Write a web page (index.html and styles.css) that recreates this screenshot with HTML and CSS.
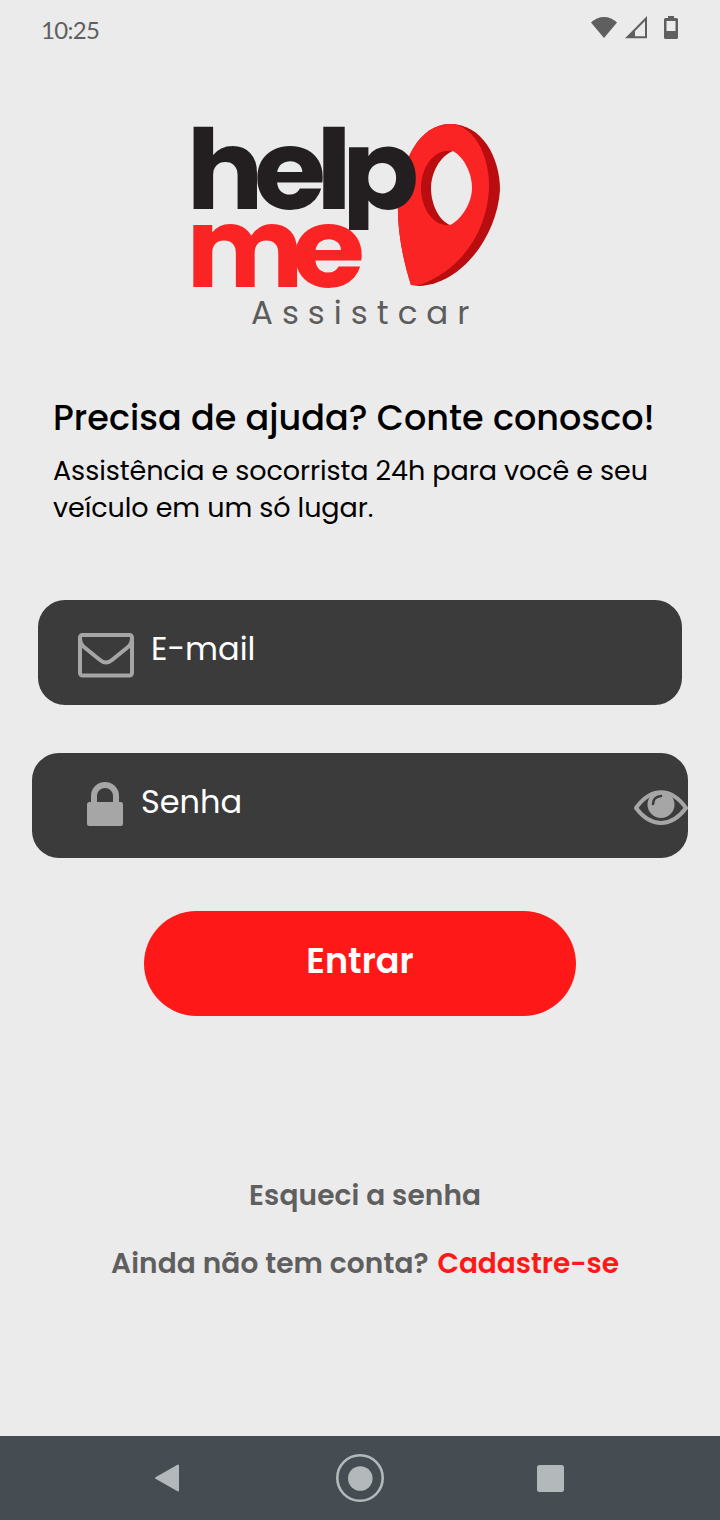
FILE: index.html
```html
<!DOCTYPE html>
<html lang="pt-BR">
<head>
    <meta charset="UTF-8">
    <meta name="viewport" content="width=device-width, initial-scale=1.0">
    <title>Help Me Assistcar</title>
    <link rel="stylesheet" href="styles.css">
</head>
<body>
    <div class="screen">
        <header class="status-bar">
            <span class="clock">10:25</span>
            <svg class="status-icons" width="90" height="26" viewBox="0 0 90 26">
                <path d="M1 8.500C8 1 20 1 27 8.500L14 24Z" fill="#5f5f5f"/>
                <path d="M37.500 23.200H56V4.500Z" fill="none" stroke="#5f5f5f" stroke-width="2"/>
                <path d="M35.500 24H45V15Z" fill="#5f5f5f"/>
                <path d="M78 2h6v2h2.500q1.500 0 1.500 1.500v18q0 1.500-1.500 1.500h-11q-1.500 0-1.500-1.500v-18q0-1.500 1.500-1.500H78ZM76.500 7v10h9V7Z" fill="#5f5f5f" fill-rule="evenodd"/>
            </svg>
        </header>

        <main class="login">
            <div class="brand">
                <svg class="logo" width="314" height="170" viewBox="190 121 314 170">
                    <clipPath id="stem"><path d="M340 100H430V230H340Z"/></clipPath>
                    <!-- map pin -->
                    <path d="M411 285C403 260 397 230 398 203C401 159 420 125 449 124C480 123 500 155 500 190C497 236 462 284 419 286Z" fill="#b90d10"/>
                    <path d="M411 285C403 260 397 230 398 203C401 159 420 125 449 124C474 124 490 156 489 189C487 228 465 268 420 285Z" fill="#fb2424"/>
                    <path d="M453 151C433 148 421 168 421 188C421 209 434 227 450 225Z" fill="#b90d10"/>
                    <path d="M453 151C465 158 472 174 472 188C472 203 461 220 450 225C438 220 431 203 431 188C431 173 440 156 453 151Z" fill="#ebebeb"/>
                    <!-- wordmark -->
                    <g class="wordmark">
                        <text class="me" x="186.500" y="287" textLength="117" lengthAdjust="spacingAndGlyphs">m</text>
                        <text class="me" x="292" y="287" textLength="73" lengthAdjust="spacingAndGlyphs">e</text>
                        <text x="186.500" y="209" textLength="77" lengthAdjust="spacingAndGlyphs">h</text>
                        <text x="254" y="209" textLength="72" lengthAdjust="spacingAndGlyphs">e</text>
                        <text x="315.500" y="209" textLength="37" lengthAdjust="spacingAndGlyphs">l</text>
                        <text x="342" y="209" textLength="77" lengthAdjust="spacingAndGlyphs" clip-path="url(#stem)">p</text>
                    </g>
                </svg>
                <p class="brand-sub">Assistcar</p>
            </div>

            <div class="intro">
                <h1>Precisa de ajuda? Conte conosco!</h1>
                <p class="line-one">Assistência e socorrista 24h para você e seu</p>
                <p class="line-two">veículo em um só lugar.</p>
            </div>

            <form class="form">
                <label class="field email">
                    <svg width="56" height="45" viewBox="0 0 56 45" fill="none" stroke="#a6a6a6" stroke-width="4">
                        <rect x="2" y="2" width="52" height="40.500" rx="2.500"/>
                        <path d="M2 5Q2 11 6 14L22 27Q28 32 34 27L50 14Q54 11 54 5"/>
                    </svg>
                    <input type="email" placeholder="E-mail">
                </label>
                <label class="field password">
                    <svg class="lock" width="36" height="45" viewBox="0 0 36 45">
                        <path d="M7 22V14a11 11 0 0 1 22 0v8" fill="none" stroke="#a6a6a6" stroke-width="6"/>
                        <rect y="20" width="36" height="24" rx="2.500" fill="#a6a6a6"/>
                    </svg>
                    <input type="password" placeholder="Senha">
                    <svg class="eye" width="54" height="36" viewBox="0 0 54 36">
                        <path d="M2 18C17-3 37-3 52 18C37 38 17 38 2 18Z" fill="none" stroke="#a6a6a6" stroke-width="4" stroke-linejoin="round"/>
                        <circle cx="27" cy="14.500" r="13.500" fill="#a6a6a6"/>
                        <path d="M19 14Q19 7 27 6" fill="none" stroke="#3b3b3b" stroke-width="2.500" stroke-linecap="round"/>
                    </svg>
                </label>
                <button class="submit-btn" type="button">Entrar</button>
            </form>

            <div class="links">
                <a class="forgot">Esqueci a senha</a>
                <p class="signup"><span>Ainda não tem conta?</span> <a>Cadastre-se</a></p>
            </div>
        </main>

        <nav class="nav-bar">
            <svg width="26" height="30" viewBox="0 0 26 30"><path d="M24 2.500V27.500L2 15Z" fill="#b3b8ba" stroke="#b3b8ba" stroke-width="2" stroke-linejoin="round"/></svg>
            <svg class="home" width="48" height="48" viewBox="0 0 48 48"><circle cx="24" cy="24" r="22.700" fill="none" stroke="#b3b8ba" stroke-width="2.600"/><circle cx="24.300" cy="24.500" r="12.300" fill="#b3b8ba"/></svg>
            <svg width="27" height="27" viewBox="0 0 27 27"><rect width="27" height="27" rx="2.500" fill="#b3b8ba"/></svg>
        </nav>
    </div>
</body>
</html>
```

FILE: styles.css
```css
* {
    box-sizing: border-box;
}
body {
    margin: 0;
    background-color: #ebebeb;
    font-family: Poppins, Inter, sans-serif;
}
h1, p {
    margin: 0;
    white-space: nowrap;
}
svg {
    display: block;
    flex-shrink: 0;
}
.screen {
    display: flex;
    flex-direction: column;
    width: 720px;
    height: 1520px;
}
.status-bar {
    display: flex;
    justify-content: space-between;
    height: 60px;
    padding: 14px 40px 0 41px;
}
.clock {
    font-family: Lato, sans-serif;
    font-size: 24px;
    line-height: 31px;
    letter-spacing: -0.7px;
    color: #5f5f5f;
}
.login {
    flex: 1;
    padding-top: 61px;
}
.logo {
    margin-left: 190px;
    overflow: visible;
}
.wordmark {
    font-size: 111px;
    font-weight: 700;
    fill: #231f20;
}
.wordmark .me {
    fill: #fb2424;
}
.brand-sub {
    padding-left: 251px;
    font-size: 32.5px;
    font-weight: 400;
    line-height: 44px;
    letter-spacing: 9px;
    color: #5c5c5c;
}
.intro {
    padding: 61px 0 0 53px;
    color: #000;
}
h1 {
    font-size: 35px;
    font-weight: 500;
    line-height: 44px;
    letter-spacing: 0.04px;
}
.intro p {
    font-size: 27px;
    line-height: 37px;
    letter-spacing: -0.08px;
}
.intro .line-one {
    margin-top: 12px;
}
.form {
    display: flex;
    flex-direction: column;
    align-items: center;
    margin-top: 74px;
}
.field {
    display: flex;
    align-items: center;
    height: 105px;
    border-radius: 27px;
    background-color: #3b3b3b;
}
.email {
    width: 644px;
    padding: 5px 40px 0;
    gap: 17px;
}
.password {
    width: 656px;
    margin-top: 48px;
    padding-left: 55px;
    gap: 18px;
}
.field input {
    flex: 1;
    min-width: 0;
    padding: 0 0 12px;
    border: none;
    outline: none;
    background: none;
    font-family: inherit;
    font-size: 32px;
    color: #fff;
}
.password input {
    padding-bottom: 8px;
}
.field input::placeholder {
    color: #fff;
    opacity: 1;
}
.lock {
    margin-bottom: 2px;
}
.eye {
    margin-top: 5px;
}
.submit-btn {
    width: 432px;
    height: 105px;
    margin-top: 53px;
    padding: 0 0 6px;
    border: none;
    border-radius: 53px;
    background-color: #ff1818;
    color: #fff;
    font-family: inherit;
    font-size: 35px;
    font-weight: 600;
}
.links {
    display: flex;
    flex-direction: column;
    gap: 28px;
    margin-top: 160px;
    font-size: 28px;
    font-weight: 600;
    line-height: 40px;
    letter-spacing: 0.12px;
    color: #5f5f5f;
}
.forgot {
    padding-left: 249px;
}
.signup {
    padding-left: 111px;
}
.signup a {
    margin-left: 2px;
    letter-spacing: -0.05px;
    color: #ff1818;
}
.nav-bar {
    display: flex;
    align-items: center;
    justify-content: space-between;
    height: 84px;
    padding: 0 156px 0 154px;
    background-color: #454d52;
}
.home {
    margin-left: 2px;
}
```
